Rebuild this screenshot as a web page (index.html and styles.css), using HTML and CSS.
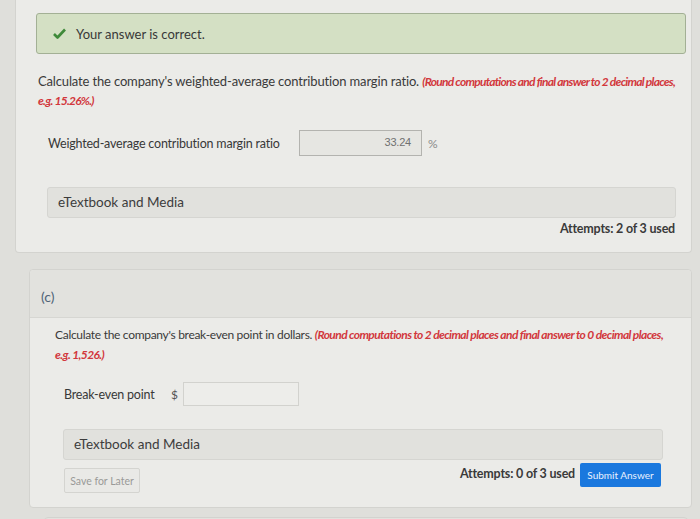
FILE: index.html
```html
<!DOCTYPE html>
<html lang="en">
<head>
    <meta charset="UTF-8">
    <meta name="viewport" content="width=device-width, initial-scale=1.0">
    <title>Question (b) and (c)</title>
    <link rel="stylesheet" href="styles.css">
</head>
<body>
    <div class="card card-done">
        <div class="alert">
            <svg class="check" width="13" height="11" viewBox="0 0 13 11">
                <path d="M1 6 L4.5 9.5 L12 1.5" fill="none" stroke="#3f8a3a" stroke-width="2.6" stroke-linejoin="round"/>
            </svg>
            <span>Your answer is correct.</span>
        </div>
        <p class="question">Calculate the company's weighted-average contribution margin ratio. <em class="hint">(Round computations and final answer to 2 decimal places, e.g. 15.26%.)</em></p>
        <div class="answer-row">
            <label class="answer-label">Weighted-average contribution margin ratio</label>
            <div class="answer-box filled">33.24</div>
            <span class="unit">%</span>
        </div>
        <div class="media">eTextbook and Media</div>
        <div class="attempts">Attempts: 2 of 3 used</div>
    </div>

    <div class="card card-open">
        <div class="card-header">(c)</div>
        <div class="card-body">
            <p class="question">Calculate the company's break-even point in dollars. <em class="hint">(Round computations to 2 decimal places and final answer to 0 decimal places, e.g. 1,526.)</em></p>
            <div class="answer-row">
                <label class="answer-label short">Break-even point</label>
                <span class="currency">$</span>
                <div class="answer-box empty"></div>
            </div>
            <div class="media">eTextbook and Media</div>
            <div class="footer">
                <button class="save-btn">Save for Later</button>
                <span class="attempts">Attempts: 0 of 3 used</span>
                <button class="submit-btn">Submit Answer</button>
            </div>
        </div>
    </div>

    <div class="card card-next"></div>
</body>
</html>
```

FILE: styles.css
```css
* {
    box-sizing: border-box;
    margin: 0;
    padding: 0;
}
body {
    font-family: Lato, "Open Sans", sans-serif;
    background-color: #dfdfdb;
    color: #383838;
    height: 519px;
    overflow: hidden;
}
.card {
    background: #ebebe8;
    border: 1px solid #d3d3cf;
    border-radius: 4px;
}
.card-done {
    margin-left: 15px;
    width: 677px;
    border-top: none;
    border-radius: 0 0 4px 4px;
    padding: 13px 0 13px 0;
}
.alert {
    margin: 0 5px 0 20px;
    height: 41px;
    background: #d4e0c4;
    border: 1px solid #a3b095;
    border-radius: 3px;
    display: flex;
    align-items: center;
    padding-left: 16px;
    gap: 10px;
    font-size: 13px;
}
.check {
    flex: none;
}
.question {
    font-size: 13px;
    line-height: 18px;
    letter-spacing: -0.15px;
    color: #3a3a3a;
}
.hint {
    color: #d2373c;
    font-weight: bold;
    font-size: 12px;
    letter-spacing: -0.75px;
}
.card-done .question {
    margin: 18px 0 0 22px;
    width: 645px;
}
.answer-row {
    display: flex;
    align-items: center;
    font-size: 12.5px;
    letter-spacing: -0.2px;
}
.card-done .answer-row {
    margin: 20px 0 0 32px;
}
.answer-label {
    width: 251px;
}
.answer-label.short {
    width: 107px;
}
.answer-box {
    background: #e6e6e2;
    border: 1px solid #b3b3af;
}
.answer-box.filled {
    width: 123px;
    height: 26px;
    text-align: right;
    padding: 5px 10px 0 0;
    font-family: "Liberation Sans", Arial, sans-serif;
    font-size: 11px;
    color: #707070;
}
.answer-box.empty {
    width: 116px;
    height: 24px;
    background: #ededea;
    border-color: #d2d2ce;
}
.unit {
    margin-left: 6px;
    color: #8a8a8a;
    font-size: 12px;
}
.currency {
    width: 12px;
    font-size: 12px;
    color: #555;
}
.media {
    height: 31px;
    background: #e1e1dd;
    border: 1px solid #d5d5d1;
    border-radius: 3px;
    padding-left: 10px;
    font-size: 13.5px;
    line-height: 29px;
    color: #3c3c3c;
}
.card-done .media {
    margin: 31px 0 0 31px;
    width: 629px;
}
.attempts {
    font-size: 12.5px;
    font-weight: bold;
    color: #3a3a3a;
    letter-spacing: -0.2px;
}
.card-done .attempts {
    margin-top: 1px;
    text-align: right;
    padding-right: 16px;
    line-height: 20px;
}
.card-open {
    margin: 16px 0 0 29px;
    width: 663px;
}
.card-header {
    height: 48px;
    background: #e2e2de;
    border-bottom: 1px solid #d6d6d2;
    border-radius: 4px 4px 0 0;
    padding: 18px 0 0 11px;
    font-size: 14px;
    line-height: 18px;
    color: #4f6478;
}
.card-body {
    padding: 7px 30px 14px 25px;
}
.card-body .question {
    font-size: 12px;
    line-height: 20px;
    letter-spacing: -0.3px;
    width: 615px;
}
.card-body .hint {
    font-size: 12px;
    letter-spacing: -0.6px;
}
.card-body .answer-row {
    margin: 17px 0 0 9px;
}
.card-body .media {
    margin: 23px 0 0 8px;
    width: 600px;
}
.footer {
    display: flex;
    align-items: flex-start;
    margin: 3px 0 0 9px;
}
.save-btn {
    margin-top: 5px;
    width: 76px;
    height: 25px;
    background: #e9e9e6;
    border: 1px solid #d4d4d0;
    border-radius: 2px;
    font-family: Lato, sans-serif;
    font-size: 10.5px;
    color: #9a9a98;
}
.footer .attempts {
    margin-left: auto;
    margin-right: 5px;
    line-height: 22px;
}
.submit-btn {
    width: 81px;
    height: 24px;
    background: #1a78de;
    border: none;
    border-radius: 2px;
    font-family: Lato, sans-serif;
    font-size: 10px;
    color: #e8f1ff;
}
.card-next {
    margin: 9px 0 0 44px;
    width: 644px;
    height: 40px;
    background: #e2e2de;
}
```
